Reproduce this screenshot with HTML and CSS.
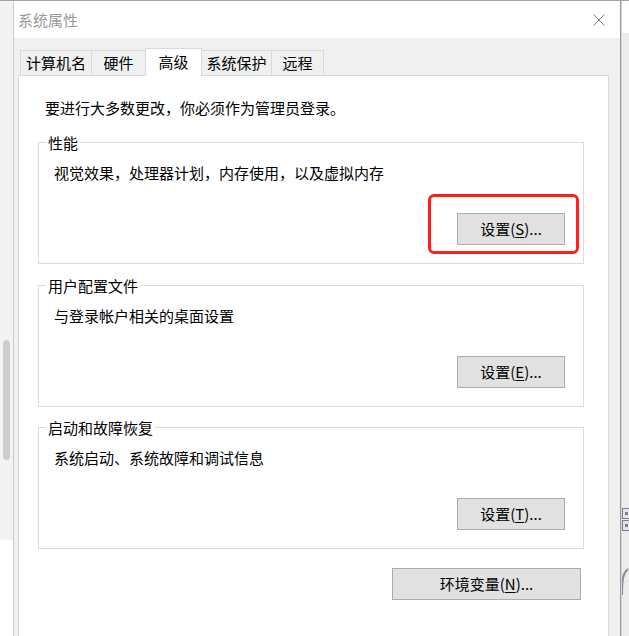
FILE: index.html
```html
<!DOCTYPE html>
<html lang="zh-CN">
<head>
<meta charset="utf-8">
<title>系统属性</title>
<link rel="stylesheet" href="styles.css">
</head>
<body>
<div class="screen">
  <div class="left-strip"><div class="thumb"></div></div>
  <div class="window">
    <div class="titlebar">
      <span class="title">系统属性</span>
      <span class="close">
        <svg width="12" height="12" viewBox="0 0 12 12"><path d="M0.5 0.5 L11.5 11.5 M11.5 0.5 L0.5 11.5" stroke="#808080" stroke-width="1" fill="none"/></svg>
      </span>
    </div>
    <div class="body">
      <div class="tabs">
        <div class="tab t1">计算机名</div>
        <div class="tab t2">硬件</div>
        <div class="tab t3 active">高级</div>
        <div class="tab t4">系统保护</div>
        <div class="tab t5">远程</div>
      </div>
      <div class="panel">
        <p class="notice">要进行大多数更改，你必须作为管理员登录。</p>
        <div class="group g1">
          <div class="group-title"><span>性能</span></div>
          <div class="group-desc">视觉效果，处理器计划，内存使用，以及虚拟内存</div>
          <button class="btn">设置(<u>S</u>)...</button>
          <div class="highlight"></div>
        </div>
        <div class="group g2">
          <div class="group-title"><span>用户配置文件</span></div>
          <div class="group-desc">与登录帐户相关的桌面设置</div>
          <button class="btn">设置(<u>E</u>)...</button>
        </div>
        <div class="group g3">
          <div class="group-title"><span>启动和故障恢复</span></div>
          <div class="group-desc">系统启动、系统故障和调试信息</div>
          <button class="btn">设置(<u>T</u>)...</button>
        </div>
        <button class="btn env">环境变量(<u>N</u>)...</button>
      </div>
    </div>
  </div>
  <div class="right-strip">
    <svg width="7" height="635" viewBox="0 0 7 635">
      <rect x="0.5" y="507.5" width="9" height="10" fill="#e4e4ea" stroke="#7d7d92"/>
      <rect x="3" y="511" width="3" height="3" fill="#7d7d92"/>
      <rect x="0.5" y="519.5" width="9" height="10" fill="#e4e4ea" stroke="#7d7d92"/>
      <rect x="3" y="523" width="3" height="3" fill="#7d7d92"/>
      <path d="M6 568 C1 572 0 578 0 594" stroke="#8a8a9c" stroke-width="2" fill="none"/>
    </svg>
  </div>
</div>
</body>
</html>
```

FILE: styles.css
```css
* { box-sizing: border-box; }
html, body { margin: 0; padding: 0; }
body {
  width: 629px;
  height: 636px;
  overflow: hidden;
  background: #fff;
  font-family: "Noto Sans CJK SC", "Microsoft YaHei", sans-serif;
  font-size: 15px;
  color: #000;
}
.screen {
  display: flex;
  align-items: flex-start;
  height: 636px;
  border-top: 1px solid #a3a3a3;
}
.left-strip {
  width: 13px;
  height: 635px;
  flex: none;
  background: linear-gradient(#f3f3f3 0, #f3f3f3 539px, #ffffff 539px);
  padding: 339px 0 0 3px;
}
.thumb {
  width: 7px;
  height: 120px;
  border-radius: 4px;
  background: #cdcdcd;
}
.window {
  width: 608px;
  height: 660px;
  flex: none;
  border-left: 1px solid #cccccc;
  border-right: 1px solid #9c9c9c;
  display: flex;
  flex-direction: column;
}
.titlebar {
  height: 37px;
  flex: none;
  background: #fff;
  display: flex;
  align-items: center;
  justify-content: space-between;
}
.title {
  padding-left: 4px;
  color: #9a9a9a;
  line-height: 20px;
}
.close {
  width: 42px;
  height: 37px;
  display: flex;
  align-items: center;
  justify-content: center;
}
.close svg { display: block; }
.body {
  flex: 1;
  background: #f0f0f0;
  padding: 10px 11px 0 4px;
  display: flex;
  flex-direction: column;
}
.tabs {
  display: flex;
  align-items: flex-end;
  margin-left: 2px;
}
.tab {
  height: 25px;
  border: 1px solid #d9d9d9;
  border-bottom: none;
  background: #f0f0f0;
  line-height: 23px;
  text-align: center;
  margin-left: -1px;
  white-space: nowrap;
}
.tab.t1 { margin-left: 0; width: 72px; }
.tab.t2 { width: 55px; }
.tab.t3 { width: 57px; }
.tab.t4 { width: 71px; }
.tab.t5 { width: 53px; }
.tab.active {
  height: 28px;
  background: #fff;
  margin-bottom: -1px;
  line-height: 25px;
  position: relative;
  z-index: 1;
}
.panel {
  flex: 1;
  width: 591px;
  background: #fff;
  border: 1px solid #d9d9d9;
  display: flex;
  flex-direction: column;
}
.notice {
  margin: 22px 0 0 26px;
  line-height: 20px;
}
.group {
  margin: 24px 24px 0 19px;
  height: 122px;
  border: 1px solid #dcdcdc;
  display: flex;
  flex-direction: column;
  position: relative;
}
.group.g2 { margin-top: 21px; }
.group.g3 { margin-top: 20px; }
.group-title {
  margin: -10px 0 0 7px;
  height: 20px;
  line-height: 20px;
}
.group-title span {
  background: #fff;
  padding: 0 2px;
}
.group-desc {
  margin: 10px 0 0 15px;
  line-height: 20px;
}
.btn {
  align-self: flex-end;
  margin: 30px 18px 0 0;
  width: 108px;
  height: 32px;
  padding: 0;
  border: 1px solid #adadad;
  background: #e1e1e1;
  font-family: inherit;
  font-size: 15px;
  line-height: 30px;
  color: #000;
  border-radius: 0;
}
.btn u { text-underline-offset: 2px; }
.btn.env {
  margin: 19px 27px 0 0;
  width: 189px;
}
.highlight {
  position: absolute;
  left: 389px;
  top: 51px;
  width: 151px;
  height: 60px;
  border: 3px solid #ff1f1f;
  border-radius: 6px;
}
.right-strip {
  width: 8px;
  height: 635px;
  flex: none;
  border-left: 1px solid #d6d6d6;
  background: linear-gradient(#ffffff 0, #ffffff 32px, #ececec 32px);
  overflow: hidden;
}
.right-strip svg { display: block; }
```
